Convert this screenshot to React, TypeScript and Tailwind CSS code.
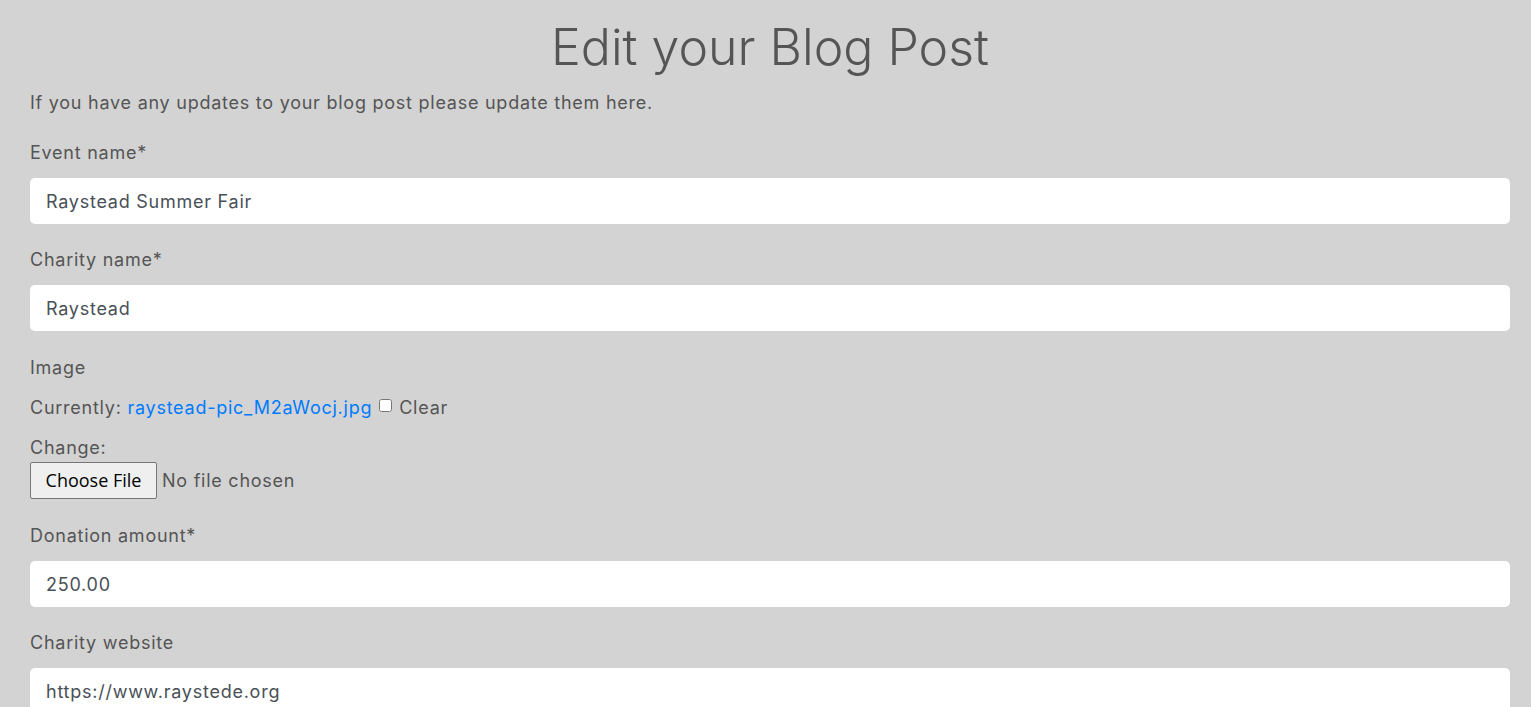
import React from 'react';

const Field: React.FC<{ label: string; value: string }> = ({ label, value }) => (
  <div className="mb-[22px]">
    <label className="block mb-[12px]">{label}</label>
    <input
      type="text"
      defaultValue={value}
      className="block w-full h-[46px] px-[16px] bg-white rounded-[5px] text-[#495057] outline-none"
    />
  </div>
);

const App: React.FC = () => {
  return (
    <div
      className="min-h-screen bg-[#d3d3d3] text-[#555555] text-[18px] leading-[27px] tracking-[0.75px]"
      style={{ fontFamily: 'Inter, "Noto Sans", sans-serif' }}
    >
      <main className="pl-[30px] pr-[21px] pt-[17px]">
        {/* Heading */}
        <h1 className="text-center text-[50px] leading-[60px] font-light tracking-normal text-[#555555]">
          Edit your Blog Post
        </h1>
        <p className="mt-[12px] mb-[23px]">If you have any updates to your blog post please update them here.</p>

        <form>
          <Field label="Event name*" value="Raystead Summer Fair" />
          <Field label="Charity name*" value="Raystead" />

          {/* Image upload */}
          <div className="mb-[23px]">
            <label className="block pt-[1px]">Image</label>
            <div className="mt-[13px] flex items-center">
              <span>Currently:&nbsp;</span>
              <a href="#" className="text-[#007bff]">raystead-pic_M2aWocj.jpg</a>
              <input type="checkbox" className="ml-[7px] mr-[7px] w-[13px] h-[13px] -mt-[4px]" />
              <span>Clear</span>
            </div>
            <div className="mt-[13px]">Change:</div>
            <div className="flex items-center mt-[1px]">
              <button
                type="button"
                className="h-[37px] w-[127px] bg-[#efefef] border border-[#767676] rounded-[2px] text-black tracking-normal"
                style={{ fontFamily: '"Open Sans", sans-serif' }}
              >
                Choose File
              </button>
              <span className="ml-[5px]">No file chosen</span>
            </div>
          </div>

          <Field label="Donation amount*" value="250.00" />
          <Field label="Charity website" value="https://www.raystede.org" />
        </form>
      </main>
    </div>
  );
};

export default App;
